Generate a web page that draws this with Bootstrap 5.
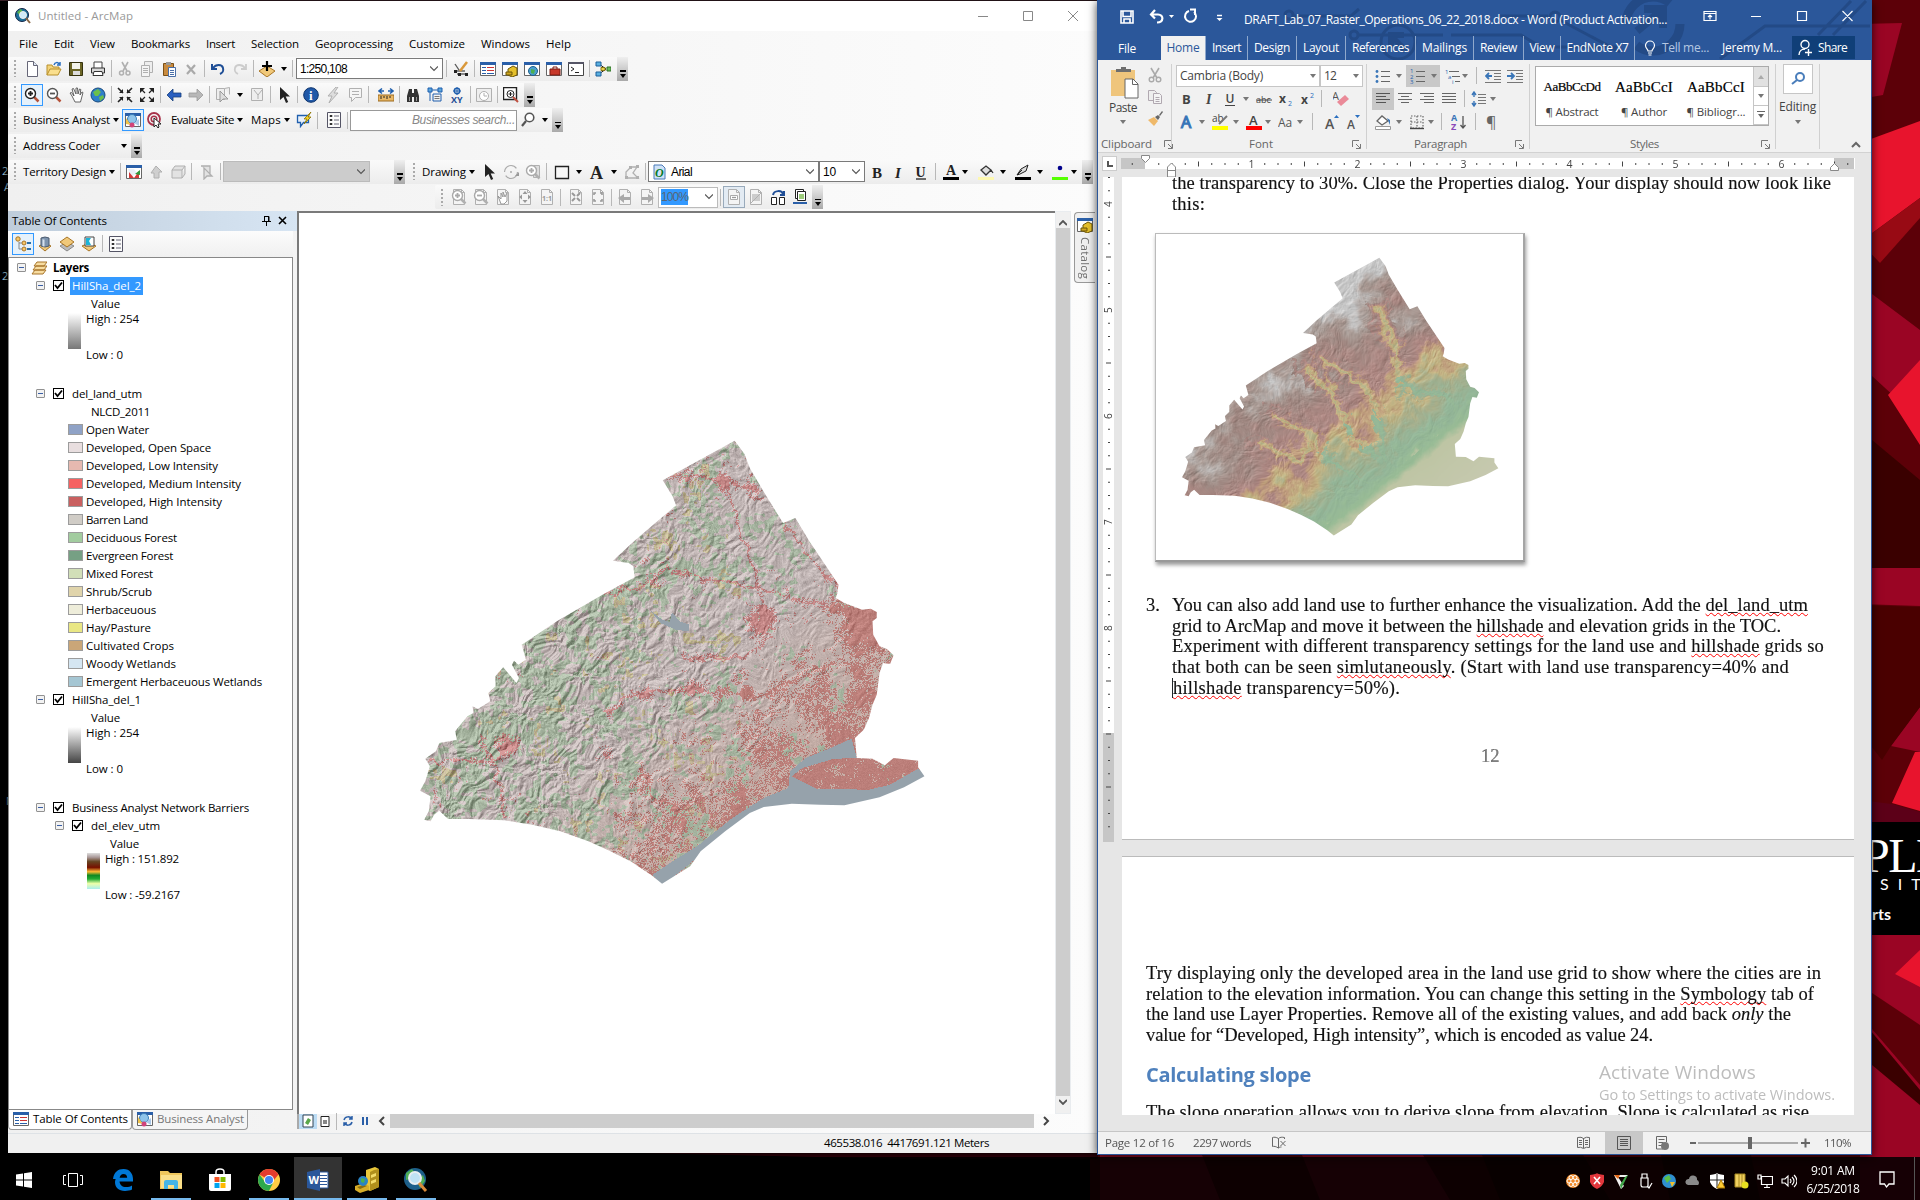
<!DOCTYPE html>
<html lang="en">
<head>
<meta charset="utf-8">
<title>Desktop</title>
<link href="https://cdn.jsdelivr.net/npm/bootstrap@5.3.0/dist/css/bootstrap.min.css" rel="stylesheet">
<style>
body{width:1920px;height:1200px;overflow:hidden;background:#000;font-family:"Open Sans","Noto Sans",sans-serif;font-size:11.5px;line-height:16px;color:#000}
svg{display:block;flex:none}
.fit{display:inline-block;white-space:pre}
.desk{position:relative;width:1920px;height:1200px;overflow:hidden}
.wall{position:absolute;left:0;top:0}
.win{position:absolute}
#arc{left:8px;top:1px;width:1089px;height:1152px;background:linear-gradient(90deg,#f0f0f0,#fcfcfc);box-shadow:0 0 5px #000}
#word{left:1097px;top:0;width:775px;height:1155px;background:#e6e6e6;border:1px solid #2b579a;border-top:0;border-bottom-width:2px;box-shadow:0 2px 9px rgba(0,0,0,.75)}
.atitle{height:30px;background:#fff;color:#999;padding-left:7px}
.amenu{height:25px;padding-left:11px}
.amenu .fit{margin-right:16px}
.trow{height:25.7px;align-items:center}
.tb{height:24px;display:flex;align-items:center;background:linear-gradient(#fafafa,#ececec);border-radius:2px}
.grip{height:17px;background:repeating-linear-gradient(#aaa 0 2px,transparent 2px 4px);width:2px;margin:0 5px 0 6px}
.cell{width:22px;height:22px;display:flex;align-items:center;justify-content:center;flex:none}
.cell.on{border:1px solid #3399ff;background:#e5f1fb}
.cell.hov{border:1px solid #9ab;background:#e3ebf3}
.sp{width:5px;height:17px;flex:none;background:linear-gradient(#b8b8b8,#b8b8b8) 2px 0/1px 100% no-repeat}
.dn{width:12px;height:22px;flex:none;display:flex;align-items:center;justify-content:center}
.dn:after{content:"";border:3px solid transparent;border-top:4px solid #000;border-bottom:0}
.ovf{width:11px;height:24px;flex:none;background:linear-gradient(#efefef,#a9a9a9);display:flex;flex-direction:column;align-items:center;justify-content:flex-end;padding-bottom:3px}
.ovf:before{content:"";width:6px;height:1.5px;background:#000;margin-bottom:2px}
.ovf:after{content:"";border:3px solid transparent;border-top:4px solid #000;border-bottom:0}
.cmb{height:21px;border:1px solid #7a7a7a;background:#fff;display:flex;align-items:center;justify-content:space-between;padding:0 4px 0 3px;flex:none;font-family:"Liberation Sans",sans-serif;font-size:12px}
.tochead{height:20px;background:linear-gradient(90deg,#bfcddb,#d7e5f3);padding:0 6px 0 4px}
.toctools{height:26px;background:linear-gradient(#fcfcfc,#f0f0f0);padding-left:4px}
.toc{width:285px;height:853px;border:1px solid #888;background:#fff;padding:1px 0 0 8px}
.tr{height:18px;display:flex;align-items:center}
.box{width:9px;height:9px;border:1px solid #919191;border-radius:1px;background:linear-gradient(#3a5fa5,#3a5fa5) 1px 3px/5px 1px no-repeat #f2f2f2;flex:none}
.chk{width:11px;height:11px;border:1px solid #000;flex:none}
.sw{width:15px;height:11px;border:1px solid #9c9c9c;margin-right:3px;flex:none}
.mapbox{width:758px;height:903px;border-left:2px solid #7a7a7a;border-top:2px solid #7a7a7a;background:#fff;padding:205px 0 0 100px}
.vscroll{width:16px;background:#f0f0f0}
.cattab{width:21px;height:71px;border:1px solid #999;border-right:0;border-radius:4px 0 0 4px;background:#f0f0f0;margin:1px 0 0 3px}
.cattab .fit{writing-mode:vertical-rl;color:#707070}
.btab{height:20px;border:1px solid #999;border-top:0;border-radius:0 0 4px 4px;padding:0 3px 0 4px;background:#f5f5f5}
.wtitle{position:relative;height:60px;background:#2b579a;color:#fff}
.wdeco{position:absolute;left:0;top:0}
.wline{position:relative;height:36px}
.wtab{height:24px;border-right:1px solid #8fa8cc;text-align:center;display:flex;align-items:center;justify-content:center;font-size:12px;margin:0}
.wtab.active{background:#f1f1f1;color:#2b579a}
.ribbon{height:93px;background:#f1f1f1;border-bottom:1px solid #d2d2d2;color:#444}
.grp{height:85px;margin-top:4px;border-right:1px solid #d0d0d0;display:flex;flex-direction:column}
.rr{display:flex;align-items:center;height:23px}
.lbl{display:flex;align-items:center;height:14px;color:#666;margin-top:auto;margin-bottom:-2px}
.ribbon .dn:after{border-width:3px;border-top:4px solid #777;border-bottom:0}
.ribbon .cell.hl,.ribbon .hl{background:#c8c8c8}
.wcmb{height:22px;border:1px solid #c6c6c6;background:#fff;display:flex;align-items:center;justify-content:space-between;padding-left:3px;flex:none;font-size:12px}
.gal{width:234px;height:60px;border:1px solid #ababab;background:#fff;display:flex;margin:2px 0 0 5px}
.gcol{display:flex;flex-direction:column;width:72px;align-items:center;padding-top:12px}
.gcol .fit+.fit{margin-top:9px}
.gbtn{width:15px;height:20px;border:1px solid #c6c6c6;border-top:0;border-right:0;display:flex;align-items:center;justify-content:center;flex:none}
.ft{font-family:"Liberation Serif",serif;color:#000;-webkit-text-stroke:.2px #000}
.docarea{height:938px;overflow:hidden}
.pg{width:732px;background:#fff;font-family:"Liberation Serif","DejaVu Serif",serif;font-size:18.5px;line-height:20.6px;color:#111;overflow:hidden;-webkit-text-stroke:.15px #111}
.pg p{margin:0}
.pg .fit{display:block;width:max-content}
.err{text-decoration:underline wavy red 1px;text-underline-offset:1px;text-decoration-skip-ink:none}
.frame{width:370px;height:329px;border:1px solid #bbb;border-bottom:2px solid #999;border-right:2px solid #a5a5a5;box-shadow:1px 3px 4px rgba(0,0,0,.4);margin:19px 0 0 33px}
.frame canvas{display:block}
.h2x{font-family:"Open Sans",sans-serif;font-weight:700;font-size:20px;line-height:26px;color:#4f81bd;-webkit-text-stroke:0}
.wstat{height:23px;background:#f1f1f1;border-top:1px solid #c6c6c6;color:#555}
.mark1{position:absolute;left:501px;top:1058px;color:#bdbdbd;font-size:19px;line-height:28px}
.mark2{position:absolute;left:501px;top:1085px;color:#bdbdbd;font-size:14.5px;line-height:20px}
.task{position:absolute;left:0;top:1157px;width:1920px;height:43px;background:rgba(0,0,0,.86);color:#fff}
.ti{width:40px;height:43px;display:flex;align-items:center;justify-content:center;margin-right:9px;flex:none;padding-top:3px}
.ti.run{border-bottom:2px solid #76b9ed;padding-top:5px}
</style>
<script src="https://cdn.jsdelivr.net/npm/bootstrap@5.3.0/dist/js/bootstrap.bundle.min.js"></script>
</head>
<body>
<div class="desk">
<svg class="wall" width="1920" height="1200" viewBox="0 0 1920 1200">
<rect width="1920" height="1200" fill="#000"/>
<rect x="1090" width="830" height="1200" fill="#5c0008"/>
<rect width="1098" height="1" fill="#3a2028"/>
<g fill="#9a0524"><path d="M1860 24L1902 23 1883 95 1860 99z"/><path d="M1860 285l60 45v90l-60-55zM1860 568h60v38l-60-2zM1920 707l-29 39 29 6zM1860 935h60v265h-60z"/></g>
<g fill="#e8142d"><path d="M1860 143L1920 121V198L1860 242z"/><path d="M1920 360v85l-32-50zM1915 752l-23 51 28 8v-59zM1895 974l25-24v37z"/></g>
<path d="M1860 242l60-44v20l-40 45z" fill="#980a14"/><path d="M1860 430l60 50v88h-60z" fill="#3a0000"/>
<path d="M1860 605l60 2v100l-29 39-9 14-22-28z" fill="#4a0000"/><path d="M1860 800l32 4 28 8v10h-60z" fill="#5c0018"/>
<path d="M1860 985l60 40v60l-60-70z" fill="#5c0008"/><path d="M1860 1018l60 72v15l-60-50z" fill="#3a0000"/>
<path d="M1100 1150h100l20 50h-120zM1300 1150h120l30 50h-130z" fill="#9a0a24"/><path d="M1480 1150h100l30 50h-110zM1660 1150h90l10 50h-90z" fill="#3a0000"/>
<path d="M640 1153h458v6H900z" fill="#2a0008"/>
<rect x="1860" y="822" width="60" height="113" fill="#000"/>
<g fill="#fff"><text x="1863" y="872" font-family="Liberation Serif" font-size="48" letter-spacing="-1.5">PLE</text><text x="1880" y="890" font-family="Lato" font-size="16" letter-spacing="9">SIT</text><text x="1872" y="920" font-family="Lato" font-weight="700" font-size="16">rts</text></g>
<g fill="#9bc" font-size="11" font-family="Open Sans"><text x="2" y="175">2</text><text x="4" y="191">A</text><text x="2" y="280">2</text><text x="6" y="805">N</text></g>
</svg>

<div class="win" id="arc">
 <div class="atitle d-flex align-items-center"><span data-i="arcmap"></span><span class="fit" style="margin-left:7px" data-w="95">Untitled - ArcMap</span>
  <svg class="ms-auto" width="100" height="12" style="margin-right:19px" fill="none" stroke="#888"><path d="M0 6.500h10M45.500 1.500h9v9h-9zM90 1l10 10M100 1L90 11"/></svg></div>
 <div class="amenu d-flex align-items-center" id="menu"></div>
 <div class="trow d-flex"><div class="tb" data-t="g new open save print | cut copy paste del | undo redo | add v | _1 c:147:1:250,108 _1 | _1 edit | wtoc wcat wsearch wbox wpy | model _3 o"></div></div>
 <div class="trow d-flex"><div class="tb" data-t="g +zin zout hand globe | fin fout | back fwd | sel v clr | arrow | info bolt html | _4 meas | bino route xy | clock | wzoom _2 o"></div></div>
 <div class="trow d-flex"><div class="tb" data-t="g _2 t:87:Business_Analyst v +ba target _5 t:63:Evaluate_Site v _5 t:30:Maps v note | _3 list | s mag v _1 o"></div></div>
 <div class="trow d-flex"><div class="tb" data-t="g _2 t:77:Address_Coder _18 v _1 o"></div></div>
 <div class="trow d-flex"><div class="tb" data-t="g _2 t:83:Territory_Design v | tdes gpoly gbox | _2 gsel | d _24 o"></div><div class="tb" data-t="_2 g _2 t:44:Drawing v arrow rot gzoom | _2 rect v _1 bigA v _1 poly | f z _1 B _-1 I _1 U _1 | _2 fA _-3 v _4 fB v _3 fP v _3 fD _-3 v _2 o"></div></div>
 <div class="trow d-flex" style="padding-left:427px"><div class="tb" data-t="g pzin pzout phand pfit pone | _2 pin pout | pback pfwd p | ~pfoc pdis chg pages _1 o"></div></div>
 <div class="d-flex" style="height:922px;margin-top:.8px">
  <div class="flex-shrink-0" style="width:289px">
   <div class="tochead d-flex align-items-center"><span class="fit" data-w="95">Table Of Contents</span><svg class="ms-auto" width="30" height="12" fill="none" stroke="#000"><path d="M3 1.500h5v5M3.500 1v5.500M1 6.500h9M5.500 7v4M7.500 1v6"/><path stroke-width="1.600" d="M18 2l7 7M25 2l-7 7"/></svg></div>
   <div class="toctools d-flex align-items-center" data-t="+tree tdb tlay tsel | list" style="width:285px"></div>
   <div class="toc" id="toc"></div>
   <div class="d-flex"><div class="btab d-flex align-items-center bg-white"><span data-i="wtoc"></span><span class="fit ms-1" data-w="95">Table Of Contents</span></div><div class="btab d-flex align-items-center" style="color:#777"><span data-i="ba"></span><span class="fit ms-1" data-w="87">Business Analyst</span></div></div>
  </div>
  <div>
   <div class="d-flex">
    <div class="mapbox"><canvas id="m1" width="550" height="490"></canvas></div>
    <div class="vscroll d-flex flex-column align-items-center justify-content-between py-2 border border-light-subtle"><svg width="8" height="6" fill="none" stroke="#555" stroke-width="1.800"><path d="M0 5l4-4 4 4"/></svg><div style="width:14px;height:868px;background:#cdcdcd"></div><svg width="8" height="6" fill="none" stroke="#555" stroke-width="1.800"><path d="M0 1l4 4 4-4"/></svg></div>
    <div class="cattab d-flex flex-column align-items-center pt-1"><span data-i="wcat"></span><span class="fit mt-1" data-h="42">Catalog</span></div>
   </div>
   <div class="d-flex align-items-center" style="height:15px;width:758px;border-left:2px solid #aaa"><div data-t="mA mB | mC mD" class="d-flex align-items-center" id="mini"></div><svg width="8" height="10" class="mx-1" fill="none" stroke="#444" stroke-width="2"><path d="M6 1L2 5l4 4"/></svg><div style="width:644px;height:14px;background:#cdcdcd"></div><svg class="ms-2" width="8" height="10" fill="none" stroke="#444" stroke-width="2"><path d="M2 1l4 4-4 4"/></svg></div>
  </div>
 </div>
 <div class="d-flex align-items-center border-top" style="height:20px;background:#f0f0f0;padding-left:816px"><span class="fit" data-w="165">465538.016  4417691.121 Meters</span></div>
</div>

<div class="win" id="word">
 <div class="wtitle">
  <svg class="wdeco" width="774" height="60" fill="none" stroke="#234a86" stroke-width="3"><circle cx="300" cy="42" r="17"/><path stroke-width="6" d="M308 51L294 37M293 48V35h13"/><circle cx="191" cy="15" r="4" /><path d="M195 16h58l8-7M353 35h70l20 12h76M260 35h85"/><circle cx="256" cy="35" r="4"/><circle cx="555" cy="24" r="27" stroke-width="9" stroke-dasharray="60 25"/><path stroke-width="8" d="M539 31l24-20M546 9h19v19"/><circle cx="457" cy="17" r="5"/><path d="M462 20l60 32M400 16h50M622 59l45-33h105M720 35l33-34M735 35l33-34"/></svg>
  <div class="wline d-flex align-items-center">
   <svg width="130" height="20" style="margin:-3px 0 0 20px" fill="none" stroke="#fff" stroke-width="1.600"><path d="M3 4h12v12H3zM5 4.500v5h8v-5M6 16v-4h6v4"/><path stroke-width="2.200" d="M37 3l-4 4.500 4 4M33 7.500h7c6 0 6 8-1 8"/><path d="M51 8l2.500 3L56 8z" fill="#fff" stroke="none"/><path stroke-width="2" d="M71 4a5.500 5.500 0 1 0 5 1M72 2.500h5V8"/><path stroke-width="1.500" d="M99 8.500h5"/><path d="M98.500 11l3 3 3-3z" fill="#fff" stroke="none"/></svg>
   <span class="fit" style="margin:3px 0 0 -4px;font-size:12px" data-w="423">DRAFT_Lab_07_Raster_Operations_06_22_2018.docx - Word (Product Activation...</span>
   <svg class="ms-auto" width="154" height="14" style="margin:-4px 14px 0 0" fill="none" stroke="#fff" stroke-width="1.200"><path d="M1 2.500h12v9H1zM1 4.500h12M7 10.500V6M5 8l2-2 2 2M48 7.500h10M94.500 2.500h9v9h-9zM139.500 2l10 10M149.500 2l-10 10"/></svg>
  </div>
  <div class="wline d-flex">
   <div class="d-flex align-items-center" style="width:63px;height:26px;padding-left:20px;font-size:12px"><span class="fit" data-w="18">File</span></div>
   <div id="tabs" class="d-flex"></div>
   <svg width="14" height="18" class="ms-2 mt-1" fill="none" stroke="#fff" stroke-width="1.200"><path d="M5 11c0-2-2.500-2.500-2.500-5.500a4.500 4.500 0 0 1 9 0C11.500 8.500 9 9 9 11zM5 13h4M5.500 15h3"/></svg>
   <span class="fit mt-1" data-w="47" style="color:#b5c7e2;margin-left:5px;font-size:12px">Tell me...</span><span class="fit mt-1" data-w="60" style="margin-left:13px;font-size:12px">Jeremy M...</span>
   <div class="d-flex align-items-center ps-1" style="margin-left:10px;width:63px;height:23px;background:#103f78;font-size:12px"><svg width="18" height="18" fill="none" stroke="#fff" stroke-width="1.400"><circle cx="9" cy="5.500" r="4"/><path d="M3 16c0-4 3-6 6-6M9 13.500h7M12.500 10v7"/></svg><span class="fit ms-1" data-w="29">Share</span></div>
  </div>
 </div>
 <div class="ribbon d-flex">
  <div class="grp" style="width:74px"><div class="d-flex"><div class="d-flex flex-column align-items-center" style="width:50px"><svg width="32" height="34" viewBox="0 0 32 34" style="margin-top:2px"><path fill="#efc57c" d="M4 4h24v26H4z"/><path fill="#6e6e6e" d="M9 6V3h5V1h5v2h5v3z"/><path fill="#fff" stroke="#666" d="M18 13h8l5 5v14H18z"/><path d="M25.500 13v5.500H31" fill="none" stroke="#666"/></svg><span class="fit" data-w="28" style="font-size:12px">Paste</span><span class="dn" style="height:12px"></span></div><div class="d-flex flex-column" style="margin-left:-4px"><span class="cell"  data-i="wcut"></span><span class="cell" data-i="wcopy"></span><span class="cell" data-i="brush"></span></div></div><div class="lbl"><span class="fit" style="margin-left:3px" data-w="51">Clipboard</span><span class="ms-2" data-i="lau"></span></div></div>
  <div class="grp" style="width:195px"><div class="rr" style="padding-left:4px"><div class="wcmb" style="width:144px"><span class="fit" data-w="83">Cambria (Body)</span><span class="dn"></span></div><div class="wcmb" style="width:43px"><span class="fit" data-w="12">12</span><span class="dn"></span></div></div>
   <div class="rr" style="padding-left:3px" data-t="rB rI rU _-1 v _1 abc x2 x3 | _6 eras"></div><div class="rr" style="padding-left:4px" data-t="rA _-2 v _1 rab _-1 v _1 rfA _-3 v _1 Aa _-3 v _4 | _6 gA _-1 sA"></div><div class="lbl"><span class="fit" style="margin-left:77px" data-w="24">Font</span><span class="ms-auto" style="margin-right:2px" data-i="lau"></span></div></div>
  <div class="grp" style="width:163px"><div class="rr" style="padding-left:5px" data-t="bul _-1 v _1 #num #v _1 mul _-4 v _3 | _3 outd ind"></div><div class="rr" style="padding-left:5px" data-t="#al ac ar aj _2 | _1 spc _-3 v"></div><div class="rr" style="padding-left:5px" data-t="shd _-1 v _1 brd _-3 v _2 | _4 sort _3 | _2 pil"></div><div class="lbl"><span class="fit" style="margin-left:47px" data-w="53">Paragraph</span><span class="ms-auto" style="margin-right:2px" data-i="lau"></span></div></div>
  <div class="grp" style="width:246px"><div class="gal"><div class="gcol"><span class="fit ft" style="font-size:13px" data-w="57">AaBbCcDd</span><span class="fit" data-w="53">¶ Abstract</span></div><div class="gcol"><span class="fit ft" style="font-size:15px" data-w="58">AaBbCcI</span><span class="fit" data-w="46">¶ Author</span></div><div class="gcol"><span class="fit ft" style="font-size:15px" data-w="58">AaBbCcI</span><span class="fit" data-w="59">¶ Bibliogr...</span></div><div style="margin-left:1px"><div class="gbtn" style="background:#e1e1e1"><svg width="6" height="4"><path fill="#aaa" d="M0 4l3-4 3 4z"/></svg></div><div class="gbtn" style="height:19px"><span class="dn"></span></div><div class="gbtn" style="height:19px"><svg width="8" height="8"><path fill="#666" d="M0 0h8v1H0zM1 3h6L4 7z"/></svg></div></div></div><div class="lbl"><span class="fit" style="margin-left:100px" data-w="29">Styles</span><span class="ms-auto" style="margin-right:2px" data-i="lau"></span></div></div>
  <div class="grp align-items-center" style="width:44px"><div class="d-flex align-items-center justify-content-center bg-white" style="width:30px;height:30px;border:1px solid #c6c6c6"><svg width="16" height="16" fill="none" stroke="#4a7ebb" stroke-width="2"><circle cx="10" cy="6" r="4"/><path d="M7 9l-5 4"/></svg></div><span class="fit" style="font-size:12px;margin-top:5px" data-w="37">Editing</span><span class="dn" style="height:14px"></span></div>
  <svg class="ms-auto" width="10" height="7" style="margin:81px 10px 0 0" fill="none" stroke="#666" stroke-width="2"><path d="M1 6l4-4 4 4"/></svg>
 </div>
 <div class="d-flex" style="height:24px"><div style="width:15px;height:15px;margin:3px 4px 0 4px;border:1px solid #ccc;background:#fff"><svg width="13" height="13" fill="none" stroke="#555" stroke-width="2"><path d="M5 4v5h5"/></svg></div><svg id="hr" width="734" height="24"></svg></div>
 <div class="docarea d-flex"><svg id="vr" width="11" height="665" style="margin:0 8px 0 5px"></svg>
  <div>
   <div class="pg" style="height:663px;border-bottom:1px solid #bbb">
    <div style="padding-left:50px;margin-top:-4px"><span class="fit" data-w="659">the transparency to 30%. Close the Properties dialog. Your display should now look like</span><span class="fit" data-w="33">this:</span></div>
    <div class="frame"><canvas id="m2" width="366" height="325"></canvas></div>
    <div class="d-flex" style="margin-top:33px;padding-left:24px"><span class="fit" style="width:26px">3.</span><div><span class="fit" data-w="636">You can also add land use to further enhance the visualization. Add the <span class="err">del_land_utm</span></span><span class="fit" data-w="609">grid to ArcMap and move it between the <span class="err">hillshade</span> and elevation grids in the TOC.</span><span class="fit" data-w="652">Experiment with different transparency settings for the land use and <span class="err">hillshade</span> grids so</span><span class="fit" data-w="617">that both can be seen <span class="err">simlutaneously</span>. (Start with land use transparency=40% and</span><span class="fit border-start border-dark" data-w="228"><span class="err">hillshade</span> transparency=50%).</span></div></div>
    <p style="margin-top:48px;padding-left:359px;color:#808080">12</p>
   </div>
   <div style="height:16px"></div>
   <div class="pg" style="height:259px;border-top:1px solid #bbb;padding:106px 0 0 24px">
    <span class="fit" data-w="675">Try displaying only the developed area in the land use grid to show where the cities are in</span><span class="fit" data-w="668">relation to the elevation information. You can change this setting in the <span class="err">Symbology</span> tab of</span><span class="fit" data-w="645">the land use Layer Properties. Remove all of the existing values, and add back <i>only</i> the</span><span class="fit" data-w="507">value for “Developed, High intensity”, which is encoded as value 24.</span>
    <span class="fit h2x" data-w="165" style="margin:17px 0 14px">Calculating slope</span>
    <span class="fit" data-w="663">The slope operation allows you to derive slope from elevation. Slope is calculated as rise</span>
   </div>
  </div></div>
 <div style="height:16px"></div>
 <div class="wstat d-flex align-items-center" style="padding-left:7px"><span class="fit" data-w="69">Page 12 of 16</span><span class="fit" style="margin-left:19px" data-w="58">2297 words</span><svg width="16" height="14" style="margin-left:20px" fill="none" stroke="#666"><path d="M7.500 12V2.500C5 1 3 1 1.500 1.500v9C3 10 5 10.500 7.500 12c1-1 2-1 3-1M7.500 2.500C9 1 11 1 13.500 1.500V3M9.500 5l5 5M14.500 5l-5 5"/></svg>
  <div class="ms-auto d-flex align-items-center"><span class="cell" data-i="vread"></span><span class="cell" style="width:38px;margin-left:10px;background:#c8c8c8" data-i="vpage"></span><span class="cell ms-2" style="margin-right:17px" data-i="vweb"></span><svg width="122" height="14" fill="#666"><path d="M0 6h6v2H0zM8 6.500h100v1H8zM58 1h4v12h-4zM111 6h9v2h-9zM114.500 2.500h2v9h-2z"/></svg><span class="fit" data-w="27" style="margin:0 20px 0 12px">110%</span></div></div>
 <span class="fit mark1" data-w="157">Activate Windows</span><span class="fit mark2" data-w="236">Go to Settings to activate Windows.</span>
</div>

<div class="task d-flex">
 <div class="ti" style="margin-left:4px"><svg width="16" height="16" fill="#fff"><path d="M0 2.500l7-1v6H0zM8 1.300L16 0v7.500H8zM0 8.500h7v6l-7-1zM8 8.500h8V16l-8-1.300z"/></svg></div>
 <div class="ti" style="margin-right:8px"><svg width="20" height="14" fill="none" stroke="#fff"><path d="M5.500.5h9v13h-9zM3 2.500H.5v9H3M17 2.500h2.500v9H17"/></svg></div>
 <div class="ti" style="margin:0 8px 0 2px"><svg width="20" height="22"><path fill="#0078d7" d="M0 10C1 3 5 0 10.500 0 17 0 20 5 20 10v2.500H6.500C7 16 9 18 13 18c2.500 0 4.500-.7 6-1.600v4.200C17 21.600 14.500 22 12 22 5.500 22 2 18.500 2 13c0-3 2-6 5-7-1.500.8-2.300 2.500-2.500 4zM6.600 8.800h7.600C14 6 12.500 5 10.500 5S7 6.500 6.600 8.800z"/></svg></div>
 <div class="ti run"><svg width="22" height="20"><path fill="#f0c75c" d="M0 1h8l2 2h12v16H0z"/><path fill="#fbe08a" d="M1 5h21v13H1z"/><path fill="#45b5e6" d="M4 19v-7q0-2 2-2h10q2 0 2 2v7h-4v-4H8v4z"/></svg></div>
 <div class="ti"><svg width="24" height="24"><path fill="none" stroke="#fff" stroke-width="1.500" d="M8 7V4q0-3 4-3t4 3v3"/><path fill="#fff" d="M1 6h22v15q0 2-2 2H3q-2 0-2-2z"/><path fill="#f25022" d="M6.500 9h5v5h-5z"/><path fill="#7fba00" d="M12.500 9h5v5h-5z"/><path fill="#00a4ef" d="M6.500 15h5v5h-5z"/><path fill="#ffb900" d="M12.500 15h5v5h-5z"/></svg></div>
 <div class="ti run" style="margin-right:5px"><svg width="22" height="22" viewBox="-11 -11 22 22"><circle r="11" fill="#fc4"/><path fill="#e33b2e" d="M0 0L-9.500-5.500A11 11 0 0 1 9.500-5.500L5 0z"/><path fill="#2da94f" d="M-9.500-5.500A11 11 0 0 0 0 11L4 3-4 2z"/><circle r="5" fill="#fff"/><circle r="4" fill="#4285f4"/></svg></div>
 <div class="ti run" style="width:48px;margin-right:5px;background:#333"><svg width="22" height="22"><path fill="#fff" stroke="#2b579a" d="M11 3h10v16H11z"/><path stroke="#2b579a" d="M13 6.500h7M13 9.500h7M13 12.500h7M13 15.500h7"/><path fill="#2b579a" d="M0 3l13-3v22L0 19z"/><text x="1.500" y="15" font-size="11" font-weight="700" fill="#fff">W</text></svg></div>
 <div class="ti run"><svg width="26" height="26" viewBox="0 0 26 26"><path fill="#e9c73a" d="M12 3l9-3 4 2v18l-9 4-4-2z"/><path fill="#b08f1c" d="M20 3l5-1v18l-9 4V5z"/><path fill="#f3dc6a" d="M17 8l5-2v3l-5 2zM17 14l5-2v3l-5 2z"/><path fill="#d8ae28" d="M1 19l9-3 5 3v4l-9 3-5-3z"/><path fill="#8a6d10" d="M3 20l7-2 3 1-7 3z"/><circle cx="9" cy="14" r="5" fill="#2a83c4"/><path fill="#4caf50" d="M7 11l4 1-1 4-3-1z"/></svg></div>
 <div class="ti run"><svg width="26" height="26"><circle cx="12" cy="12" r="11" fill="#1d5f8a"/><path fill="#4fae55" d="M3 6l6-4 3 4-4 6-5 1zM14 14l6-6 2 6-5 7z"/><circle cx="12" cy="11" r="6" fill="#bfe2f4" stroke="#e8eef2" stroke-width="2"/><path stroke="#d98a3a" stroke-width="3" d="M16 16l7 8"/></svg></div>
 <div class="ms-auto d-flex align-items-center pt-1" id="tray"></div>
 <div class="text-center d-flex flex-column justify-content-center" style="width:64px;font-size:12px;line-height:18px;padding-top:2px;margin-right:1px"><span><span class="fit" data-w="44">9:01 AM</span></span><span><span class="fit" data-w="53">6/25/2018</span></span></div>
 <svg width="16" height="18" style="margin:14px 19px 0 13px" fill="none" stroke="#fff" stroke-width="1.300"><path d="M1 1h14v12h-5l-2.500 3L5.500 13H1z"/></svg><div style="border-left:1px solid #555;width:6px"></div>
</div>
</div>

<script>
const P=(d,f,s,w)=>`<path d="${d}" fill="${f||'none'}"${s?` stroke="${s}" stroke-width="${w||1}"`:''}/>`;
const C=(x,y,r,f,s,w)=>`<circle cx="${x}" cy="${y}" r="${r}" fill="${f||'none'}"${s?` stroke="${s}" stroke-width="${w||1}"`:''}/>`;
const T=(t,x,y,z,f,e)=>`<text x="${x}" y="${y}" font-size="${z}" fill="${f||'#444'}" ${e||''}>${t}</text>`;
const G='#b0b0b0',K='#222',SF='font-family="Liberation Serif" font-weight="700"';
const win=P('M.5 1.500h15v13H.5z','#fff','#666')+P('M0 1h16v3H0z','#2a5fa8');
const pagei=P('M2.500.5h8l3 3v12h-11z','#f4f4f4',G)+P('M10.500.5v3h3','none',G);
const lens=(c,m)=>P('M10 10l4.500 4.500','none',c==K?'#b5533a':G,2.500)+C(6.5,6.5,5,'#fff',c,1.4)+P(m,'none',c,1.8);
const lines=(c,a)=>a.map((l,i)=>P(`M${l[0]} ${2.5+i*3}H${l[1]}`,'none',c)).join('');
const ic={
new:P('M3.500.5h6l4 4v11h-10z','#fff','#667')+P('M9.500.5v4h4','#e0e8f4','#667'),
open:P('M1 14V4h5l1 2h6v3','#f3d37a','#b8902c')+P('M1 14l3-6h11l-3 6z','#fadf8e','#b8902c')+P('M8 4c1-3 4-3 5-1M14 1v3h-3','none','#2a6fc0',1.5),
save:P('M1.500 1.500h13v13h-13z','#6b6526','#35320e')+P('M4 2h8v6H4z','#f4f4ea')+P('M5 10h7v4H5z','#ddd'),
print:P('M4 7V1h8v6','#fff','#444')+P('M1.500 7h13v5h-13z','#d8d8d8','#333')+P('M4 10.500h8l1 4H3z','#fff','#333'),
cut:P('M5 1l5 9M11 1L6 10','none',G,1.6)+C(4.5,12,2,'none',G,1.5)+C(11,12,2,'none',G,1.5),
copy:P('M5.500.5h8v11h-8z','#eee',G)+P('M2.500 4.500h8v11h-8z','#f4f4f4',G)+P('M4 7.500h5M4 9.500h5M4 11.500h5','none',G),
paste:P('M2.500 2.500h10v12h-10z','#c98b3e','#7a5018')+P('M5 1h5v3H5z','#999')+P('M7.500 6.500h7v9h-7z','#fff','#4a6fa8')+P('M9 9.500h4M9 11.500h4M9 13.500h4','none','#4a6fa8'),
del:P('M4 4l8 9M12 4l-8 9','none','#aaa',2.2),
undo:P('M2 3v5h5M3 7c3-4 9-4 10 0s-1 5-3 6','none','#1f4e96',2),
redo:P('M14 3v5H9M13 7C10 3 4 3 3 7s1 5 3 6','none','#ccc',1.8),
add:P('M8 5l8 5-8 6-8-6z','#f0c879','#a87526')+P('M8 0v10M3 5h10','none','#000',2.2),
edit:P('M3 10h9M4 13h10','none',K,1.2)+P('M1 9h3v3H1zM12 12h3v3h-3zM5 12h3v3H5z',K)+P('M14 1L7 10','none','#d9983a',2.5)+P('M2 3l4 6','none','#555',1.3),
wtoc:win+P('M2 6.500h4M2 9.500h4M2 12.500h4','none','#2a5fa8')+P('M7 6.500h7M7 9.500h7','none','#c33')+P('M7 12.500h7','none','#2a5fa8'),
wcat:win+P('M6 8l5-3 4 2v7l-5 2-4-2z','#e5c02c','#6d5607')+P('M4 11h6v3H4z','#d1a720','#6d5607'),
wsearch:win+C(9,10,4.5,'#4a9fd0','#1f5f8a')+P('M7 8l4 1-1 4-3-1z','#4caf50'),
wbox:win+P('M4 8h10v6H4z','#c8382a','#7c1a10')+P('M7 8V6h4v2','none','#7c1a10'),
wpy:P('M.5 1.500h15v13H.5z','#fff','#444')+P('M0 1h16v2H0z','#556')+P('M3 6l3 2-3 2M7 11.500h4','none',K),
model:P('M4 3l7 5-7 5','none',K)+P('M1 1h5v4H1zM1 11h5v4H1z','#5bb0e0','#1a5f9a')+P('M6 6.500h4v3H6z','#e8d34a','#877513')+P('M12 6h4v4h-4z','#6cbf5a','#2d6f24'),
zin:lens(K,'M4 6.500h5M6.500 4v5'),zout:lens('#555','M4 6.500h5').replace(G,'#b5533a'),
hand:P('M4 9L2 6l1.500-.5L6 9 4 2l1.500-.5L8 7V1h1.500l.5 6 1.500-5 1.300.5L12 8l2-3 1 .5L12.500 15H7z','#fff','#555',.9),
globe:C(8,8,7,'#2f7fc8','#17487c')+P('M3 5l5-3 3 3-3 4H5zM9 10l4-2 1 3-4 3z','#6cc04a'),
fin:P('M1 1l5 5M15 1l-5 5M1 15l5-5M15 15l-5-5','none',K,1.6)+P('M6 2v4H2zM10 2v4h4zM6 14v-4H2zM10 14v-4h4z',K),
fout:P('M2 2l4 4M14 2l-4 4M2 14l4-4M14 14l-4-4','none',K,1.2)+P('M1 6V1h5zM15 6V1h-5zM1 10v5h5zM15 10v5h-5z',K),
back:P('M1 8l6-6v4h8v4H7v4z','#2a5fc0','#17407c',.8),fwd:P('M15 8L9 2v4H1v4h8v4z','#b8b8b8','#999',.8),
sel:P('M1.500 1.500h8v11h-8zM9.500 1.500l5-1v7','#eee',G)+P('M5 4v11l3-3h5z','#ddd','#999'),
clr:P('M2.500 1.500h11v12h-11zM5 3l4 5M9 8l4-5M9 8v4','#eee',G),
arrow:P('M4 0v13l3.500-3 2.500 6 2.200-1-2.500-5.500H14z',K),
info:C(8,8,7.3,'#2159a8','#0c336c')+T('i',6,13,13,'#fff',SF),
bolt:P('M11 0L3 9h4l-3 7 9-10H9l4-6z','#ddd',G),html:P('M2.500 1.500h12v9h-6l-4 4v-4h-2z','#f5f5f5',G)+P('M5 4.500h7M5 7.500h7','none',G),
meas:P('M0 8h16v6H0z','#e9b765','#9c6a1f')+P('M3 9v3M6 9v2M9 9v3M12 9v2','none',K)+P('M1 4h5M10 4h5M4 1.500L1 4l3 2.500M12 1.500L15 4l-3 2.500','none','#1f5fae',1.5),
bino:P('M2 15V9l2-7h3v4h2V2h3l2 7v6h-5v-5H7v5z','#333')+P('M4 10h1v4H4zM11 10h1v4h-1z','#999'),
route:P('M3 14V3h10M8 7h6v7H6V7z','none','#1f5fae')+P('M1 1h4v4H1zM11 1h4v4h-4z','#5ba6dc','#1f5fae')+P('M7.500 9.500h5M7.500 11.500h5','none','#777'),
xy:C(8,4,2.7,'none','#1f5fae',1.5)+P('M8 0v8M4 4h8','none','#1f5fae')+T('XY',2,16,9,'#1f4e96','font-weight="700"'),
clock:P('M.5 1.500h15v13H.5z','#eee',G)+C(8,9,4.5,'#fff',G)+P('M8 6v3h3','none',G),
wzoom:P('M.5.5h13v12H.5z','#fff','#222',1.4)+C(7.5,7,3.5,'#fff',K)+P('M5.500 7h4M7.500 5v4','none',K)+P('M10 10l5 5','none','#c05040',2),
ba:win+C(7,7,4.5,'#8fc4ea','#3a7fb8')+P('M9 11l5-4v7z','#aac8e8')+P('M1 12V6l5 7z','#f0c34a')+C(7,13,2.5,'#d0447a'),
target:C(7,7,6,'none','#a8324a',1.8)+C(7,7,2.8,'none','#a8324a',1.5)+P('M7 6v9l2-2 2 3 1-1-1-3h3z','#fff',K),
note:P('M1.500 3.500h11v7h-5l-3 4v-4h-3z','#e8f0fa','#1f5fae',1.3)+P('M15 0L8 7h3l-3 5 7-7h-3z','#f5d327','#8d7400',.8),
list:P('M1.500.5h13v15h-13z','#fbfbfb','#556')+P('M4 3.500h2v1H4zM4 7.500h2v1H4zM4 11.500h2v1H4z',K,'#333')+P('M8 4h5M8 8h5M8 12h5','none','#667'),
mag:C(9.5,5.5,4.3,'#fff','#555',1.6)+P('M6 9l-4 5','none','#555',2.2),
tdes:win+P('M2 5h6l3 4-6 4z','#e8f0f8')+P('M3 8l5 6 5-7v7H3z','#d43a3a')+P('M9 10l5-4v5z','#2f9a3f'),
gpoly:P('M3 9l5-7 6 6h-3v6H6v-5z','#cfcfcf',G),gbox:P('M2 6h10v8H2zM2 6l3-4h10l-3 4M12 14l3-4V2','#e2e2e2',G),gsel:P('M2 2h9v9M5 4v11l3-3h5z','#e2e2e2',G,1.3),
rot:C(8,8,6.5,'none','#aaa',1.2).replace('/>',' stroke-dasharray="16 4"/>')+C(8,8,1,'#aaa')+P('M12 12h4v-4z','#999'),
gzoom:P('M8.500 1.500h6v12h-6z','#ddd',G)+lens('#aaa','M4 6.500h5M6.500 4v5'),
rect:P('M1.500 2.500h13v12h-13z','#f7f7f7','#222',1.3),bigA:T('A',1,15,18,K,SF),
poly:P('M2 14V8l5-5h6L9 9l5 5z','none',G,1.3)+P('M1 12h3v3H1zM12 12h3v3h-3zM12 1h3v3h-3zM5 2h3v3H5z',G),
B:T('B',3,14,15,K,SF),I:T('I',5,14,15,K,'font-family="Liberation Serif" font-style="italic" font-weight="700"'),U:T('U',2.5,13,14,K,SF)+P('M3 15h10','none',K,1.3),
fA:T('A',3,11,14,K,SF)+P('M0 13h16v3H0z','#000'),fB:P('M3 6l5-4 5 4-5 5zM13 6l2 3','#ddd','#333',1.3)+P('M0 13h16v3H0z','#fdf8b0'),fP:P('M2 11l4-6 7-4-2 6-6 3zM2 11l5-5','#ddd','#222')+P('M0 13h16v3H0z','#000'),fD:C(8,4,2.3,'#00008b')+P('M0 13h16v3H0z','#5f0'),
pzin:pagei+lens('#aaa','M4 6.500h5M6.500 4v5'),pzout:pagei+lens('#aaa','M4 6.500h5'),phand:pagei+P('M3 7l3 3V4l2 4V3l2 5 2-4v8l-3 3H6z','#fff','#999'),pfit:pagei+P('M8 2l2.500 3h-5zM8 14l2.500-3h-5zM2 8l3-2.500v5zM14 8l-3-2.500v5z','#999'),pone:pagei+T('1:1',3,12,7,'#999','font-weight="700"'),
pin:pagei+P('M4 4l3 3M12 4L9 7M4 12l3-3M12 12L9 9','none','#999',2),pout:pagei+P('M4 6V4h2M10 4h2v2M4 10v2h2M10 12h2v-2','none','#999',1.6),pback:pagei+P('M1 9l6-4v3h6v3H7v3z','#aaa'),pfwd:pagei+P('M15 9L9 5v3H3v3h6v3z','#aaa'),
pfoc:pagei+P('M4.500 6.500h7v4h-7z','#fff','#aaa')+P('M6 8.500h4','none','#999',1.3),pdis:pagei+P('M4 5h8v7H4z','#ccc')+P('M3 14L13 4','none',G),
chg:P('M1.500 8.500h5v7h-5zM9.500 8.500h5v7h-5z','#fff',K)+P('M3 6c1-5 9-5 10-1M14 2v4h-4','none','#1f4e96',2),pages:P('M3.500.5h8v9h-8z','#fff',K)+P('M5.500 2.500h8v9h-8z','#fff',K)+P('M7 5h5v5H7z','#9ccc7a')+P('M1 13h14v2H1z','#2a5fa8'),
tree:C(3,3,2.2,'#f5c66a','#a87526')+C(9,7,2,'#f5c66a','#a87526')+C(9,13,2,'#f5c66a','#a87526')+P('M4 6v7h3M4 7h3','none','#888')+P('M12 7h4M12 13h4','none','#2a6fa8',2),
tdb:P('M2 10l6-3 6 3-6 5z','#f0c879','#a87526')+P('M4 2q4-2 8 0v8q-4 2-8 0z','#7d93ad','#4b5a6e')+P('M5.500 3q1 .5 2 .5v7q-1 0-2-.5z','#d5e0ec'),
tlay:P('M1 10l7-4 7 4-7 5z','#bbb','#888')+P('M1 6l7-5 7 5-7 5z','#f0c879','#a87526'),tsel:P('M1 10l7-3 7 3-7 5z','#f0c879','#a87526')+P('M4 1h9v9H4z','#fff','#444')+P('M5 2h5l-2 3 2 4H5z','#19b5d8'),
lay:P('M1 14l3-4h11l-3 4zM2 10l3-4h11l-3 4zM3 6l3-4h10l-3 4z','#f7dca0','#a8752a'),
mA:P('M3 2h10v12H3z','#fff','#345')+P('M5 10l3-5 3 2-3 5z','#5aa64a'),mB:P('M4 3.500h8v10H4z','#fff',K)+P('M6 7h4v4H6z','#888'),mC:P('M4 7c1-4 6-4 8-1M12 3v3H9M12 9c-1 4-6 4-8 1M4 13v-3h3','none','#2a5fa8',1.5),mD:P('M5 4h2v8H5zM9 4h2v8H9z','#2a5fa8'),
arcmap:C(7,7,6.5,'#1d6f9a','#124')+P('M2 4l4-3 2 3-3 4z','#5ab04a')+C(8,7,3.5,'#cfeaf8','#eee')+P('M11 10l4 5','none','#864',2),
wcut:P('M4 1l6 10M12 1L6 11','none','#aaa',1.6)+C(4.5,12.500,2.3,'none','#aaa',1.4)+C(11.5,12.500,2.3,'none','#aaa',1.4),
wcopy:P('M1.500 1.500h6l2 2v8h-8z','#eee','#b0a8b0')+P('M6.500 4.500h6l2 2v8h-8z','#f4f4f4','#b0a8b0')+P('M8.500 8.500h4M8.500 10.500h4M8.500 12.500h4','none','#b0a8b0'),
brush:P('M1 9l6-3 4 4-4 5z','#efb96a')+P('M8 6l3-2 2 2-2 3zM12 4l3-4 1 1-3 4z','#666'),
lau:P('M4.500 11V4.500H11M8 8l4 4M12.500 8v4.500H8','none','#777'),
rB:T('B',4,13,13,'#444','font-weight="700"'),rI:T('I',6,13,14,'#444','font-style="italic" font-weight="700" font-family="Liberation Serif"'),rU:T('U',3.500,12,12,'#444','font-weight="600"')+P('M3 14.500h10','none','#444'),
abc:T('abc',0,12,9,'#444')+P('M0 9h16','none','#444'),x2:T('x',1,12,12,'#444','font-weight="700"')+T('2',10,15,7,'#2a6fc0'),x3:T('x',1,13,12,'#444','font-weight="700"')+T('2',10,7,7,'#2a6fc0'),
eras:T('A',-1,9,11,'#555')+P('M4 11l8-7 4 4-8 7z','#ea8a98'),
rA:T('A',2,14,16,'#fff','stroke="#3a76b8" stroke-width="1.2"'),rab:T('ab',0,8,10,'#444')+P('M15 2L7 10','none','#777',2)+P('M0 12h16v4H0z','#ff0'),rfA:T('A',3,11,13,'#444','font-weight="600"')+P('M0 12h16v4H0z','#f00'),Aa:T('Aa',0,13,12,'#555'),gA:T('A',1,15,14,'#555','font-weight="600"')+P('M10 4l2.500-3L15 4z','#2a6fc0'),sA:T('A',2,15,12,'#555','font-weight="600"')+P('M10 1h5l-2.500 3z','#2a6fc0'),
bul:P('M6 3.500h9M6 8.500h9M6 13.500h9','none','#666')+C(2,3.500,1.400,'#3a76b8')+C(2,8.500,1.400,'#3a76b8')+C(2,13.500,1.400,'#3a76b8'),
num:P('M7 3.500h9M7 8.500h9M7 13.500h9','none','#666')+T('1',1,5,6,'#1f5fae')+T('2',1,10.500,6,'#1f5fae')+T('3',1,16,6,'#1f5fae'),
mul:P('M5 3.500h10M8 8.500h8M11 13.500h5','none','#666')+T('1',1,6,6,'#1f5fae')+T('a',4,11,6,'#1f5fae')+T('i',8,16,6,'#1f5fae'),
outd:P('M0 2.500h16M9 5.500h7M9 8.500h7M9 11.500h7M0 14.500h16','none','#777')+P('M7 8H1M4 5L1 8l3 3','none','#3a76b8',1.8),ind:P('M0 2.500h16M9 5.500h7M9 8.500h7M9 11.500h7M0 14.500h16','none','#777')+P('M0 8h6M4 5l3 3-3 3','none','#3a76b8',1.8),
al:lines('#555',[[1,15],[1,11],[1,15],[1,11]]),ac:lines('#666',[[1,15],[4,12],[1,15],[4,12]]),ar:lines('#666',[[1,15],[5,15],[1,15],[5,15]]),aj:lines('#666',[[1,15],[1,15],[1,15],[1,15]]),
spc:P('M7 3.500h8M7 6.500h8M7 9.500h8M7 12.500h8','none','#777')+P('M3 1v5M3 10v5M1 4l2-3 2 3M1 12l2 3 2-3','none','#3a76b8',1.4),
shd:P('M2 7l5-5 6 5-6 4z','#fff','#666',1.3)+P('M12 4l3 2v5z','#3a76b8')+P('M.5 12.500h15v3H.5z','#fff','#999'),brd:P('M2 2h12v12H2zM8 2v12M2 8h12','none','#666',1.200).replace('/>',' stroke-dasharray="1.500 1.500"/>')+P('M1 14.500h14','none','#444',1.400),
sort:T('A',0,7,9,'#3a76b8','font-weight="700"')+T('Z',0,16,9,'#8a4ab8','font-weight="700"')+P('M12 2v12M9.500 11l2.500 3 2.500-3','none','#555',1.3),pil:T('¶',3,14,16,'#666'),
vread:P('M1.500 2.500q4-1 6 1 3-2 6-1v10q-3-1-6 1-3-2-6-1zM7.500 3v10M3 5.500h3M3 7.500h3M3 9.500h3M9 5.500h3M9 7.500h3M9 9.500h3','none','#666'),vpage:P('M1.500 1.500h13v13h-13zM4 4.500h8M4 6.500h8M4 8.500h8M4 10.500h8','none','#555'),vweb:P('M9 14H2.500V1.500h10V7M4.500 4.500h6M4.500 7.500h5M4.500 10.500h3','none','#666')+C(11,11,4,'#777')
};
const svg=n=>`<svg width="16" height="16" viewBox="0 0 16 16">${ic[n]||''}</svg>`;
const fit=(w,t)=>`<span class="fit" data-w="${w}">${t}</span>`;
const chev='<svg width="8" height="6" fill="none" stroke="#555" stroke-width="1.200"><path d="M0 .5l4 4 4-4"/></svg>';
/* toolbar strings: icon names, | separator, v drop arrow, _n spacing, t: caption */
function tok(k){
 if(k=='g')return'<span class="grip"></span>';if(k=='|')return'<span class="sp"></span>';
 if(k=='v'||k=='#v')return`<span class="dn${k=='v'?'':' hl'}"></span>`;if(k=='o')return'<span class="ovf"></span>';
 if(k[0]=='_')return`<span style="margin-left:${k.slice(1)}px"></span>`;
 let m=k.split(':');
 if(m[0]=='t')return fit(m[1],m[2].replace('_',' '));
 if(m[0]=='c')return`<span class="cmb" style="width:147px">${fit(47,'1:250,108')}${chev}</span>`;
 if(k=='s')return`<span class="cmb justify-content-end fst-italic" style="width:167px;color:#888;padding-right:1px;border-color:#999">${fit(103,'Businesses search...')}</span>`;
 if(k=='d')return`<span class="cmb justify-content-end" style="width:147px;background:#ccc;border-color:#bbb">${chev}</span>`;
 if(k=='f')return`<span class="cmb" style="width:171px"><svg width="15" height="16">${P('M2 1h8l3 3v11H2z','#cfe2f8','#4a7ab8')+T('O',3,13,12,'#0a7a2a',SF+' font-style="italic"')}</svg><span class="fit ms-1 me-auto" data-w="21">Arial</span>${chev}</span>`;
 if(k=='z')return`<span class="cmb" style="width:46px">${fit(13,'10')}${chev}</span>`;
 if(k=='p')return`<span class="cmb" style="width:60px;border-color:#bbb;padding-left:2px"><span style="background:#3399ff;color:#567;line-height:16px">${fit(27,'100%')}</span>${chev}</span>`;
 let c={'+':' on','~':' hov','#':' hl'}[k[0]]||'';
 return`<span class="cell${c}">${svg(c?k.slice(1):k)}</span>`;
}
document.querySelectorAll('[data-t]').forEach(e=>e.innerHTML=e.dataset.t.split(' ').map(tok).join(''));
document.querySelectorAll('#mini .cell').forEach((e,i)=>{e.style.width='17.5px';e.style.height='15px';if(!i)e.style.background='#bcdcf4'});
document.querySelectorAll('[data-i]').forEach(e=>e.innerHTML=svg(e.dataset.i));
menu.innerHTML=[['File',19],['Edit',20],['View',25],['Bookmarks',59],['Insert',29],['Selection',48],['Geoprocessing',78],['Customize',56],['Windows',49],['Help',25]].map(a=>fit(a[1],a[0])).join('');
tabs.innerHTML=[['Home',45,33],['Insert',42,29],['Design',49,36],['Layout',49,36],['References',70,57],['Mailings',58,45],['Review',50,37],['View',37,25],['EndNote X7',74,62]].map((a,i)=>`<div class="wtab${i?'':' active'}" style="width:${a[1]}px">${fit(a[2],a[0])}</div>`).join('');
/* table of contents */
const gap=n=>`<span class="flex-shrink-0" style="width:${n}px"></span>`;
const chk='<span class="chk"><svg width="9" height="9" fill="none" stroke="#000" stroke-width="1.800"><path d="M1 4l2.500 3L8 1.500"/></svg></span>';
const node=(x,t,w,s)=>`<div class="tr">${gap(x)}<span class="box"></span>${gap(8)}${chk}${gap(6)}<span style="padding:0 2px;${s?'background:#39f;color:#fff;line-height:18px':''}">${fit(w,t)}</span></div>`;
const txt=(x,t,w)=>`<div class="tr">${gap(x)}${fit(w,t)}</div>`;
const ramp=(x,g,h,hw,l,lw)=>`<div class="d-flex" style="height:72px">${gap(x)}<div style="width:13px;height:36px;background:linear-gradient(${g})"></div><div style="margin:-2px 0 0 5px"><div style="height:36px">${fit(hw,h)}</div><div>${fit(lw,l)}</div></div></div>`;
toc.innerHTML=`<div class="tr"><span class="box"></span>${gap(5)}${svg('lay')}${gap(6)}<b>${fit(36,'Layers')}</b></div>`+node(19,'HillSha_del_2',69,1)+txt(74,'Value',29)+ramp(51,'#fff,#777','High : 254',53,'Low : 0',37)
+node(19,'del_land_utm',70)+txt(74,'NLCD_2011',59)
+[['8fa2c6','Open Water',63],['e8dedf','Developed, Open Space',125],['e6b9b0','Developed, Low Intensity',132],['f66262','Developed, Medium Intensity',155],['c96060','Developed, High Intensity',136],['d0ccc6','Barren Land',62],['a2cc9f','Deciduous Forest',91],['76a084','Evergreen Forest',87],['d2dfb8','Mixed Forest',67],['e0d4ab','Shrub/Scrub',66],['eeedda','Herbaceuous',70],['e9e784','Hay/Pasture',65],['caa678','Cultivated Crops',88],['d5e6f2','Woody Wetlands',90],['a5c6d3','Emergent Herbaceuous Wetlands',176]].map(a=>`<div class="tr">${gap(51)}<span class="sw" style="background:#${a[0]}"></span>${fit(a[2],a[1])}</div>`).join('')
+node(19,'HillSha_del_1',69)+txt(74,'Value',29)+ramp(51,'#fff,#444','High : 254',53,'Low : 0',37)
+node(19,'Business Analyst Network Barriers',177)+node(38,'del_elev_utm',69)+txt(93,'Value',29)+ramp(70,'#ddd,#a99 12%,#642 24%,#710 40%,#fb3 52%,#182 62%,#2a3 72%,#efa 85%,#aee','High : 151.892',74,'Low : -59.2167',75);
/* notification area */
const cup=[
C(8,8,7,'#f08a2a')+[0,1,2,3,4,5].map(i=>C(8+4*Math.cos(i*1.047),8+4*Math.sin(i*1.047),2,'none','#fff')).join(''),
P('M1 2q7-1 7-2 0 1 7 2v7q-2 5-7 7-5-2-7-7z','#e2373c')+P('M5 4l6 7M11 4l-6 7','none','#fff',1.6),
P('M1 2h14l-2 2H5l6 9-3 3z','#f0f0f0')+P('M1 2h6L5 6z','#e66a1a')+P('M15 2l-7 14-1-4 5-8z','#3fa648'),
P('M5 5V1h5v4M4 5h7v9H6q-2 0-2-2zM10 13l2 2 3-5','none','#fff',1.2),
C(8,8,7,'#2f8fd0')+P('M3 5l5-3 2 4-4 4z','#5ac04a')+P('M9 9l5 0-3 5z','#f0c030'),
P('M3 12a3 3 0 0 1 1-6 4 4 0 0 1 8 1 3 3 0 0 1 1 5z','#8a8a8a'),
P('M1 2q7-1 7-2 0 1 7 2v7q-2 5-7 7-5-2-7-7z','#fff')+P('M8 1v14M1 7h14','none','#222')+P('M12 7l4 8H8z','#fc3','#a70'),
P('M2 1h10v13H2z','#f0d060','#a88a20')+P('M6 1v13M9 1v13','none','#a88a20')+C(12,12,3.5,'#e8e020'),
P('M4.500 3.500h11v8h-11zM7 14.500h6M10 12v2M1 2h3v4H1z','none','#fff',1.2),
P('M1 6h3l3-3v10l-3-3H1zM9 6q2 2 0 4M11 4q4 4 0 8M13 2q6 6 0 12','none','#fff',1.100)];
tray.innerHTML=cup.map((c,i)=>`<span style="margin-right:${i<9?8:4}px"><svg width="16" height="16" viewBox="0 0 16 16">${c}</svg></span>`).join('');
/* rulers */
let r='<rect y="5" width="734" height="11" fill="#fff"/><rect y="5" width="24" height="11" fill="#c6c6c6"/><rect x="713" y="5" width="20" height="11" fill="#c6c6c6"/>';
for(let i=-1;i<55;i++){let x=24.5+i*13.25;if(!i)continue;r+=i%8==0?T(i/8,x-3,14.5,10.5,'#444'):P(`M${x} ${i%4?10:8.5}v${i%4?2:5}`,'none','#444')}
hr.innerHTML=r+P('M20.500 2.500h8v3l-4 4-4-4z','#fff','#888')+P('M46.500 24v-10l4-4 4 4v10zM46.500 17.500h8','#fff','#888')+P('M709.500 17.500v-3l4-4 4 4v3z','#fff','#888');
r='<rect width="11" height="556" fill="#fff"/><rect y="556" width="11" height="109" fill="#c6c6c6"/>';
for(let i=-2;i<48;i++){let y=27+i*13.25;if(y<0||y>660)continue;r+=(i%8==0&&i<40)?`<text transform="translate(9 ${y+3}) rotate(-90)" font-size="10" fill="#444">${4+i/8}</text>`:P(`M${i%4?5:3} ${y}h${i%4?2:5}`,'none','#444')}
vr.innerHTML=r;
/* fit captions to their widths */
document.querySelectorAll('[data-w],[data-h]').forEach(e=>{let b=e.getBoundingClientRect(),n=e.textContent.length,d=e.dataset.w?e.dataset.w-b.width:e.dataset.h-b.height;e.style.letterSpacing=(d/n).toFixed(3)+'px'});

/* county maps */
const O=[957,68,985,108,1000,150,1042,225,1095,315,1130,300,1170,370,1215,440,1253,500,1250,525,1245,540,1270,555,1320,575,1345,572,1362,582,1362,600,1350,610,1352,650,1370,685,1390,692,1410,712,1400,738,1380,735,1370,765,1362,830,1350,860,1340,900,1325,935,1300,960,1305,1020,1350,1022,1385,1042,1410,1020,1480,1028,1480,1048,1498,1075,1440,1108,1370,1138,1270,1162,1200,1160,1120,1157,1040,1167,1000,1185,930,1240,860,1300,830,1345,750,1397,720,1372,660,1330,600,1298,540,1270,460,1240,380,1220,300,1207,200,1203,140,1203,115,1178,100,1190,90,1210,72,1205,85,1180,90,1135,60,1118,75,1090,88,1045,75,1022,105,1000,115,975,165,965,160,940,195,895,212,885,210,865,225,873,260,850,255,825,275,805,275,775,297,748,335,795,342,780,322,740,328,728,340,740,362,725,350,680,450,610,580,530,672,478,668,445,655,435,610,428,670,370,790,262,780,235,752,187];
const W=[1115,1060,1160,1020,1230,990,1290,962,1305,1020,1240,1022,1150,1050,1120,1075,1190,1112,1340,1115,1400,1100,1480,1052,1510,1075,1440,1120,1270,1180,1040,1180,860,1310,750,1405,722,1370,780,1330,850,1285,950,1200,1040,1140,1110,1110];
const L=[715,575,750,605,772,612,778,583,800,610,828,620,825,640,790,635,745,615];
const hs=(x,y)=>{let n=Math.imul(x,374761393)+Math.imul(y,668265263);n=Math.imul(n^(n>>>13),1274126177);return((n^(n>>>16))>>>0)/4294967296};
const ns=(x,y)=>{let a=Math.floor(x),b=Math.floor(y),u=x-a,v=y-b;u=u*u*(3-2*u);v=v*v*(3-2*v);return(hs(a,b)*(1-u)+hs(a+1,b)*u)*(1-v)+(hs(a,b+1)*(1-u)+hs(a+1,b+1)*u)*v};
const fb=(x,y)=>ns(x,y)*.5+ns(x*2.1+7,y*2.1)*.27+ns(x*4.3,y*4.3+9)*.15+ns(x*9,y*9)*.08;
const ht=(x,y)=>{let wx=x+ns(x/19+3,y/19)*16,wy=y+ns(x/19,y/19+40)*16,u=(wx*.62-wy*.78)/15,v=(wx*.78+wy*.62)/10;return 1-Math.abs(2*fb(u,v)-1)*1.3+ns(x/7,y/7+60)*.25};
const sd=(x,y,l)=>{let m=1e9;for(let i=0;i<l.length-2;i+=2){let a=l[i],b=l[i+1],c=l[i+2]-a,d=l[i+3]-b,t=Math.max(0,Math.min(1,((x-a)*c+(y-b)*d)/(c*c+d*d)));m=Math.min(m,Math.hypot(x-a-c*t,y-b-d*t))}return m};
const mix=(a,b,t)=>a.map((v,i)=>v+(b[i]-v)*t);
function poly(c,p,fx,fy){c.beginPath();for(let i=0;i<p.length;i+=2)c.lineTo(fx(p[i]),fy(p[i+1]));c.closePath()}
function mask(w,h,p,fx,fy){let k=document.createElement('canvas');k.width=w;k.height=h;let c=k.getContext('2d');p.forEach(q=>{poly(c,q,fx,fy);c.fill()});return c.getImageData(0,0,w,h)}
const roads=[[775,175,935,185,945,250,1000,430,1030,520,1050,600,1030,640],[580,530,700,500,765,445,800,470,900,480,1000,500,1130,540,1250,570,1360,600],[230,960,265,1020,290,1130,300,1200],[590,880,680,825,830,815,1020,830,1230,740],[940,185,1042,235],[820,715,980,715,1060,650],[90,1030,260,1022,330,980],[1095,315,1253,510],[690,1040,720,1130,780,1160]];
const towns=[[310,980,55],[685,825,45],[830,815,40],[800,465,35],[1020,600,70],[1000,205,60],[1310,600,120],[600,880,30],[920,190,35],[600,1010,30],[1000,820,30],[850,720,35]];
{const w=550,h=490,fx=x=>x/2.851,fy=y=>y/3,m=mask(w,h,[O],fx,fy),wt=mask(w,h,[W,L],fx,fy),D=m.data;
for(let y=0;y<h;y++)for(let x=0;x<w;x++){let i=(y*w+x)*4;if(!D[i+3])continue;let X=x*2.851,Y=y*3,col;
 if(wt.data[i+3]>120)col=[150,162,171];
 else{let e=((X-750)*-606+(Y-1397)*-712)/935,n=fb(x/20,y/20),f=ns(x/4+50,y/4),g=hs(x,y),gr=fb(x/26+9,y/26),rx=X+(ns(x/8,y/8)-.5)*24,ry=Y+(ns(x/8+70,y/8)-.5)*24,rd=Math.min(...roads.map(q=>sd(rx,ry,q)));
 let tw=Math.max(0,...towns.map(t=>1-Math.hypot(X-t[0],Y-t[1])/t[2]));
 let urb=Math.max(.02,.95-e/400)+Math.max(0,(X-900)/2400)*.9+Math.max(0,1-rd/20)*.55+tw*1.1;
 let red=urb*.6+(n-.5)*.9+(f-.5)*.45;
 let west=Math.min(1,Math.max(0,(1150-X)/700));
 col=gr*.6+f*.4<.33+west*.19?[160,178,155]:mix([192,180,180],[196,170,162],Math.max(0,Math.min(1,1-e/420)));
 if(ns(x/17+90,y/17+3)*.55+f*.45>.74&&west>.25)col=g<.5?[192,186,138]:[180,163,134];
 if((rd<4&&g<.7)||g*.55+.25<red)col=e<330?[188,118,113]:[194,124,124];
 col=mix(col,[184,176,170],.15);
 let k=(ht(x,y)-ht(x-1.300,y-1.300))*(85+80*west),a=Math.max(-55,Math.min(26,-k*Math.min(1,.22+e/550)));col=col.map(v=>v+a+(g-.5)*12)}
 D[i]=col[0];D[i+1]=col[1];D[i+2]=col[2]}
m1.getContext('2d').putImageData(m,0,0)}
{const w=366,h=325,sx=X=>(.66*X+236.4)/3-66,sy=Y=>(.627*Y+100.4)/3-24,m=mask(w,h,[O],sx,sy),D=m.data;
const V=[[870,300,890,360,915,400,928,480,940,530,1040,555,1080,570,1110,620],[690,445,780,495,830,540,850,590,870,680,885,750],[650,475,715,530,750,610,795,690,870,750],[555,610,600,650,680,690,700,730,770,790,850,815],[510,700,625,750,665,700]];
const R=[[-260,[199,201,176]],[10,[190,197,164]],[45,[152,187,149]],[120,[147,181,152]],[200,[163,175,142]],[275,[196,180,132]],[335,[190,155,124]],[385,[174,136,131]],[600,[160,136,130]],[740,[168,154,148]],[880,[198,198,198]]];
const el=(x,y)=>{let cx=(x+66)*3,cy=(y+24)*3,X=(cx-236.4)/.66,Y=(cy-100.4)/.627,e=((X-750)*-606+(Y-1397)*-712)/935;
 if(e>60){let wx=cx+(fb(x/9,y/9)-.5)*44,wy=cy+(fb(x/9+30,y/9)-.5)*44,j=1e9;
  V.forEach(q=>{let s=sd(wx,wy,q);j=Math.min(j,s)});
  let n=fb(x/30+3,y/30+5),dt=Math.abs(fb(x/11+8,y/11)-.5);
  e+=(n-.5)*700*Math.min(1,e/600)+(ns(x/4,y/4)-.5)*40+(ht(x,y)-.7)*60;
  let hi=e>300?235:70;e=Math.min(e,hi+j*(5+dt*70)+Math.max(0,j-35)*12)}
 else e+=(fb(x/12,y/12)-.5)*40;return e};
for(let y=0;y<h;y++)for(let x=0;x<w;x++){let i=(y*w+x)*4;if(!D[i+3])continue;let e=el(x,y),c=R[R.length-1][1];
 for(let j=1;j<R.length;j++)if(e<R[j][0]){let t=Math.max(0,(e-R[j-1][0])/(R[j][0]-R[j-1][0]));c=mix(R[j-1][1],R[j][1],t);break}
 let k=(ht(x,y)-ht(x-1,y-1))*Math.min(1,Math.max(0,e/400))*55;
 D[i]=c[0]-k;D[i+1]=c[1]-k;D[i+2]=c[2]-k}
m2.getContext('2d').putImageData(m,0,0)}
</script>
</body>
</html>
